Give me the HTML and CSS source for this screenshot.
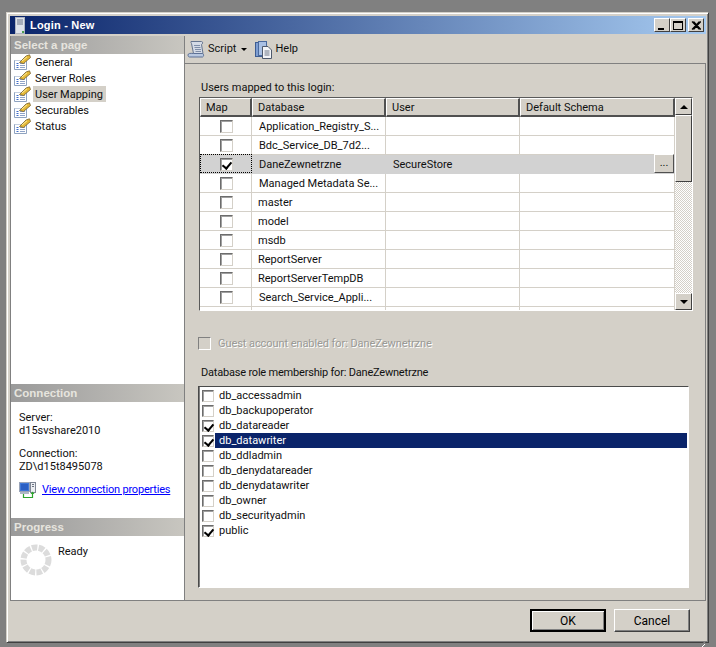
FILE: index.html
```html
<!DOCTYPE html>
<html lang="en">
<head>
<meta charset="utf-8">
<title>Login - New</title>
<link rel="stylesheet" href="styles.css">
</head>
<body>
<svg class="defs" width="0" height="0">
  <symbol id="page" viewBox="0 0 17 16">
    <path d="M.5 6.500H12.500V15.500H.5Z" fill="#fff" stroke="#8fa3c0"/>
    <path d="M1 6.500H12" stroke="#c4cfdf"/>
    <path d="M2.500 9.500h2M2.500 11.500h2M2.500 13.500h2" stroke="#3f6cc8"/>
    <path d="M6 9.500h5M6 11.500h5M6 13.500h5" stroke="#8fa3c8"/>
    <path d="M5.500 8.500L12 2L15.500 .8L16.500 3.500L9.500 9.500Z" fill="#e4b838" stroke="#77602a" stroke-width=".8"/>
    <path d="M8 7L13 2.800" stroke="#fff0a0"/>
  </symbol>
</svg>
<div class="window">
  <header class="titlebar">
    <svg class="title-icon" width="10" height="17" viewBox="0 0 10 17">
      <rect x=".5" y=".5" width="9" height="16" fill="#dfe3ea" stroke="#aeb5c2"/>
      <path d="M2 3h6M2 5h6M2 7h6" stroke="#6d7688"/>
      <rect x="7" y="14" width="2" height="2" fill="#4fa04f"/>
    </svg>
    <span class="title-text">Login - New</span>
    <div class="caption-buttons">
      <span class="caption-btn"><i class="glyph-min"></i></span>
      <span class="caption-btn"><i class="glyph-max"></i></span>
      <span class="caption-btn close"><svg width="10" height="9" viewBox="0 0 10 9"><path d="M1 0.500L8.500 8.500M2.500 0.500L10 8.500M8.500 0.500L1 8.500M10 0.500L2.500 8.500" stroke="#000" stroke-width="1.100" fill="none"/></svg></span>
    </div>
  </header>

  <div class="body">
    <aside class="sidebar">
      <h2 class="section-head">Select a page</h2>
      <ul class="pages">
        <li class="page"><svg class="page-icon"><use href="#page"/></svg><span class="page-label">General</span></li>
        <li class="page"><svg class="page-icon"><use href="#page"/></svg><span class="page-label">Server Roles</span></li>
        <li class="page"><svg class="page-icon"><use href="#page"/></svg><span class="page-label active">User Mapping</span></li>
        <li class="page"><svg class="page-icon"><use href="#page"/></svg><span class="page-label">Securables</span></li>
        <li class="page"><svg class="page-icon"><use href="#page"/></svg><span class="page-label">Status</span></li>
      </ul>
      <section class="connection">
        <h2 class="section-head">Connection</h2>
        <div class="conn-body">
          <p class="conn-line">Server:<br>d15svshare2010</p>
          <p class="conn-line">Connection:<br>ZD\d15t8495078</p>
          <div class="conn-link">
            <svg class="conn-icon" width="17" height="17" viewBox="0 0 17 17">
              <rect x=".5" y=".5" width="10" height="9" fill="#3f78d8" stroke="#9aa4b8"/>
              <rect x="2" y="2" width="7" height="6" fill="#2a5fc4"/>
              <rect x="1" y="10" width="9" height="2" fill="#b0b8c6"/>
              <rect x="11.500" y=".5" width="5" height="10" fill="#eceef2" stroke="#7f8794"/>
              <path d="M13 2.500h2M13 4.500h2" stroke="#6a7280"/>
              <path d="M4.500 12v3.500h9V11" fill="none" stroke="#2ca52c" stroke-width="1.200"/>
              <path d="M11.500 12L13.500 9.500L15.500 12Z" fill="#2ca52c"/>
            </svg>
            <a class="link" href="#">View connection properties</a>
          </div>
        </div>
      </section>
      <section class="progress">
        <h2 class="section-head">Progress</h2>
        <div class="progress-body">
          <svg width="32" height="32" viewBox="0 0 32 32"><circle cx="16" cy="16" r="12.500" fill="none" stroke="#dcdcdc" stroke-width="6" stroke-dasharray="5.500 1.300"/></svg>
          <span class="ready">Ready</span>
        </div>
      </section>
    </aside>

    <main class="main">
      <div class="toolbar">
        <svg width="18" height="17" viewBox="0 0 18 17">
          <path d="M4 .5H14.500C16 .5 16 3 14.500 3.500L16 12.500H6.500L4.500 2.500C4 1.500 3.500 1 4 .5Z" fill="#d5dbe6" stroke="#66758f"/>
          <path d="M7 4.500h6M7.500 6.500h6M8 8.500h6M8.500 10.500h5.500" stroke="#7f8ea8"/>
          <path d="M1 14C1 12.500 3 12 6.500 12.500H15.500C17 13 17 15.500 15.500 16H2.500C1.500 16 1 15 1 14Z" fill="#b9c8e0" stroke="#5d7196"/>
        </svg>
        <span class="tool-label">Script</span>
        <i class="dropdown"></i>
        <svg class="help-icon" width="17" height="18" viewBox="0 0 17 18">
          <rect x=".5" y="1.500" width="9" height="14" fill="#7e9ed2" stroke="#3e5d92"/>
          <rect x="3.500" y=".5" width="8" height="14" fill="#a9c0e4" stroke="#4a6a9e"/>
          <path d="M7.500 5.500H13L16.500 9V17.500H7.500Z" fill="#f4f5f8" stroke="#4f5a6c"/>
          <path d="M9.500 10h5M9.500 12h5M9.500 14h5" stroke="#6d7786"/>
        </svg>
        <span class="tool-label">Help</span>
      </div>

      <div class="content">
        <div class="label users-label">Users mapped to this login:</div>
        <div class="grid-frame">
          <div class="grid">
            <div class="grid-head">
              <div class="head-cell">Map</div>
              <div class="head-cell">Database</div>
              <div class="head-cell">User</div>
              <div class="head-cell">Default Schema</div>
            </div>
            <div class="row"><div class="cell map"><span class="check"></span></div><div class="cell">Application_Registry_S...</div><div class="cell"></div><div class="cell"></div></div>
            <div class="row"><div class="cell map"><span class="check"></span></div><div class="cell">Bdc_Service_DB_7d2...</div><div class="cell"></div><div class="cell"></div></div>
            <div class="row selected"><div class="cell map focus"><span class="check checked"></span></div><div class="cell">DaneZewnetrzne</div><div class="cell">SecureStore</div><div class="cell"><span class="ellipsis-btn">...</span></div></div>
            <div class="row"><div class="cell map"><span class="check"></span></div><div class="cell">Managed Metadata Se...</div><div class="cell"></div><div class="cell"></div></div>
            <div class="row"><div class="cell map"><span class="check"></span></div><div class="cell tight">master</div><div class="cell"></div><div class="cell"></div></div>
            <div class="row"><div class="cell map"><span class="check"></span></div><div class="cell tight">model</div><div class="cell"></div><div class="cell"></div></div>
            <div class="row"><div class="cell map"><span class="check"></span></div><div class="cell tight">msdb</div><div class="cell"></div><div class="cell"></div></div>
            <div class="row"><div class="cell map"><span class="check"></span></div><div class="cell tight">ReportServer</div><div class="cell"></div><div class="cell"></div></div>
            <div class="row"><div class="cell map"><span class="check"></span></div><div class="cell tight">ReportServerTempDB</div><div class="cell"></div><div class="cell"></div></div>
            <div class="row"><div class="cell map"><span class="check"></span></div><div class="cell">Search_Service_Appli...</div><div class="cell"></div><div class="cell"></div></div>
            <div class="row partial"><div class="cell map"></div><div class="cell"></div><div class="cell"></div><div class="cell"></div></div>
          </div>
          <div class="scrollbar">
            <span class="scroll-btn"><i class="arrow-up"></i></span>
            <span class="scroll-thumb"></span>
            <span class="scroll-track"></span>
            <span class="scroll-btn"><i class="arrow-down"></i></span>
          </div>
        </div>

        <div class="guest"><span class="check disabled"></span><span class="guest-label">Guest account enabled for: DaneZewnetrzne</span></div>
        <div class="label roles-label">Database role membership for: DaneZewnetrzne</div>
        <ul class="roles">
          <li class="role"><span class="check small"></span><span class="role-label">db_accessadmin</span></li>
          <li class="role"><span class="check small"></span><span class="role-label">db_backupoperator</span></li>
          <li class="role"><span class="check small checked"></span><span class="role-label">db_datareader</span></li>
          <li class="role"><span class="check small checked"></span><span class="role-label current">db_datawriter</span></li>
          <li class="role"><span class="check small"></span><span class="role-label">db_ddladmin</span></li>
          <li class="role"><span class="check small"></span><span class="role-label">db_denydatareader</span></li>
          <li class="role"><span class="check small"></span><span class="role-label">db_denydatawriter</span></li>
          <li class="role"><span class="check small"></span><span class="role-label">db_owner</span></li>
          <li class="role"><span class="check small"></span><span class="role-label">db_securityadmin</span></li>
          <li class="role"><span class="check small checked"></span><span class="role-label">public</span></li>
        </ul>
      </div>
    </main>
  </div>

  <footer class="footer">
    <button class="btn default">OK</button>
    <button class="btn">Cancel</button>
    <svg class="grip" width="14" height="15" viewBox="0 0 14 15">
      <path d="M13 1L0 14M13 5L4 14M13 9L8 14" stroke="#808080" stroke-width="1.500"/>
      <path d="M13 3L2 14M13 7L6 14M13 11L10 14" stroke="#fff"/>
    </svg>
  </footer>
</div>
</body>
</html>
```
FILE: styles.css
```css
* { box-sizing: border-box; }
html, body { margin: 0; padding: 0; }
body {
  width: 716px;
  height: 647px;
  overflow: hidden;
  background: #808080;
  font-family: Roboto, "Liberation Sans", Arial, sans-serif;
  font-size: 11px;
  color: #101010;
}
ul { list-style: none; margin: 0; padding: 0; }
h2, p { margin: 0; }
.defs { position: absolute; }

.window {
  position: relative;
  width: 703px;
  height: 631px;
  margin: 12px 0 0 6px;
  padding: 3px 2px 0 3px;
  background: #d4d0c8;
  border: 1px solid #d4d0c8;
  border-right-color: #404040;
  border-bottom-color: #404040;
  box-shadow: inset 1px 1px 0 #fff, inset -1px -1px 0 #808080;
}

.titlebar {
  display: flex;
  align-items: center;
  height: 18px;
  margin-bottom: 2px;
  padding: 0 2px 0 5px;
  background: linear-gradient(90deg, #0a246a, #a6caf0);
  box-shadow: 0 1px 0 #d4d0c8;
}
.title-icon { margin-right: 5px; flex: none; }
.title-text { color: #fff; font-family: "Liberation Sans", Arial, sans-serif; font-weight: bold; font-size: 11px; letter-spacing: .2px; }
.caption-buttons { display: flex; margin-left: auto; }
.caption-btn {
  display: flex;
  align-items: center;
  justify-content: center;
  width: 16px;
  height: 14px;
  background: #d4d0c8;
  border: 1px solid;
  border-color: #fff #404040 #404040 #fff;
}
.caption-btn.close { margin-left: 2px; }
.glyph-min { width: 6px; height: 2px; background: #000; margin-top: 7px; margin-left: -3px; }
.glyph-max { width: 10px; height: 9px; border: 1px solid #000; border-top-width: 2px; }

.body {
  display: flex;
  height: 565px;
  border-left: 1px solid #808080;
  border-bottom: 1px solid #808080;
}

.sidebar {
  display: flex;
  flex-direction: column;
  flex: none;
  width: 174px;
  background: #fff;
  border-right: 1px solid #808080;
}
.section-head {
  height: 18px;
  padding-left: 3px;
  font-family: "Liberation Sans", Arial, sans-serif;
  font-size: 11.5px;
  line-height: 18px;
  font-weight: bold;
  color: #e6e4de;
  background: linear-gradient(90deg, #9a9a9a, #c8c6c0);
}
.pages { flex: 1; }
.page { display: flex; align-items: center; height: 16px; padding-left: 3px; }
.page-icon { width: 17px; height: 16px; margin-right: 2px; flex: none; }
.page-label { padding: 0 2px; height: 16px; line-height: 18px; white-space: nowrap; }
.page-label.active { background: #d4d0c8; padding-right: 3px; }

.connection { height: 134px; flex: none; }
.conn-body { padding: 9px 8px; }
.conn-line { line-height: 13px; margin-bottom: 10px; }
.conn-link { display: flex; align-items: center; gap: 6px; margin-top: -1px; white-space: nowrap; }
.conn-icon { flex: none; }
.link { color: #0000ff; text-decoration: underline; letter-spacing: -.2px; margin-bottom: 2px; }

.progress { height: 82px; flex: none; }
.progress-body { display: flex; align-items: flex-start; padding: 8px 9px; gap: 6px; }
.ready { line-height: 16px; }

.main { display: flex; flex-direction: column; flex: 1; min-width: 0; }
.toolbar {
  display: flex;
  align-items: center;
  height: 27px;
  padding-left: 2px;
  flex: none;
}
.tool-label { margin-left: 3px; margin-bottom: 2px; }
.dropdown {
  width: 0;
  height: 0;
  margin: 0 8px 0 5px;
  border: 3px solid transparent;
  border-top: 3px solid #000;
  border-bottom: 0;
}
.help-icon { flex: none; }
.content {
  flex: 1;
  padding: 16px 0 0 14px;
  border-top: 1px solid #808080;
  border-right: 1px solid #808080;
}
.label { height: 14px; line-height: 16px; padding-left: 2px; }
.users-label { margin-bottom: 3px; }

.grid-frame {
  display: flex;
  width: 494px;
  height: 214px;
  border: 1px solid;
  border-color: #5a5a5a #fff #fff #5a5a5a;
  background: #fff;
}
.grid { flex: none; width: 475px; overflow: hidden; }
.grid-head, .row { display: grid; grid-template-columns: 52px 134px 134px 155px; }
.head-cell {
  height: 19px;
  padding-left: 5px;
  line-height: 17px;
  background: #d4d0c8;
  border: 1px solid;
  border-color: #fff #505050 #505050 #fff;
  border-bottom-width: 2px;
  border-right-width: 2px;
}
.row { height: 19px; background: #fff; }
.cell {
  position: relative;
  height: 19px;
  padding-left: 7px;
  line-height: 20px;
  border-right: 1px solid #d4d0c8;
  border-bottom: 1px solid #d4d0c8;
  white-space: nowrap;
}
.cell.tight { padding-left: 6px; }
.cell.map { padding: 3px 0 0 20px; }
.row.selected { background: #d2d2d2; margin-top: -1px; height: 20px; }
.row.selected .cell { border-color: transparent; line-height: 21px; }
.row.selected .cell.map { padding-top: 4px; outline: 1px dotted #000; outline-offset: -1px; }
.partial, .partial .cell { height: 4px; }

.check {
  display: block;
  position: relative;
  width: 13px;
  height: 13px;
  background: #fff;
  border: 1px solid;
  border-color: #6c6c6c #d4d0c8 #d4d0c8 #6c6c6c;
  box-shadow: inset 1px 1px 0 #a0a0a0;
}
.check.small { width: 12px; height: 12px; flex: none; }
.check.checked::after {
  content: "";
  position: absolute;
  left: 3px;
  top: 1px;
  width: 4px;
  height: 7px;
  border: solid #000;
  border-width: 0 2px 2px 0;
  transform: rotate(40deg);
}
.check.disabled {
  background: #d4d0c8;
  border-color: #808080 #fff #fff #808080;
  box-shadow: none;
  flex: none;
}
.ellipsis-btn {
  position: absolute;
  right: 0;
  top: 0;
  width: 20px;
  height: 19px;
  line-height: 16px;
  text-align: center;
  background: #d4d0c8;
  border: 1px solid;
  border-color: #fff #505050 #505050 #fff;
}

.scrollbar { display: flex; flex-direction: column; flex: none; width: 17px; }
.scroll-btn, .scroll-thumb {
  display: flex;
  align-items: center;
  justify-content: center;
  flex: none;
  height: 17px;
  background: #d4d0c8;
  border: 1px solid;
  border-color: #fff #404040 #404040 #fff;
}
.scroll-thumb { height: 67px; }
.scroll-track {
  flex: 1;
  background-color: #fff;
  background-image: conic-gradient(#d4d0c8 25%, #fff 0 50%, #d4d0c8 0 75%, #fff 0);
  background-size: 2px 2px;
}
.arrow-up, .arrow-down { width: 0; height: 0; border: 4px solid transparent; }
.arrow-up { border-bottom-color: #000; border-top: 0; }
.arrow-down { border-top-color: #000; border-bottom: 0; }

.guest { display: flex; align-items: center; gap: 7px; margin-top: 26px; height: 13px; margin-left: -1px; }
.guest-label { color: #9a9a96; text-shadow: 1px 1px 0 #fff; letter-spacing: -.07px; }
.roles-label { margin-top: 15px; margin-bottom: 7px; letter-spacing: -.2px; }

.roles {
  width: 491px;
  height: 202px;
  margin-left: -1px;
  padding: 1px 1px 0 3px;
  background: #fff;
  border: 1px solid;
  border-color: #4a4a4a #fff #fff #4a4a4a;
  box-shadow: inset 1px 0 0 #808080;
}
.role { display: flex; align-items: center; height: 15px; }
.role-label { flex: 1; margin-left: 1px; padding-left: 4px; height: 15px; line-height: 15px; }
.role-label.current { background: #0a246a; color: #fff; }

.footer {
  position: relative;
  display: flex;
  justify-content: flex-end;
  gap: 8px;
  padding: 8px 16px 0 0;
}
.btn {
  width: 76px;
  height: 23px;
  padding: 0;
  font: inherit;
  font-size: 12px;
  color: #000;
  background: #d4d0c8;
  border: 1px solid;
  border-color: #fff #404040 #404040 #fff;
  box-shadow: inset -1px -1px 0 #808080;
}
.btn.default { border: 2px solid #000; box-shadow: inset 1px 1px 0 #fff, inset -1px -1px 0 #808080; }
.grip { position: absolute; right: 0; bottom: -24px; }
```
